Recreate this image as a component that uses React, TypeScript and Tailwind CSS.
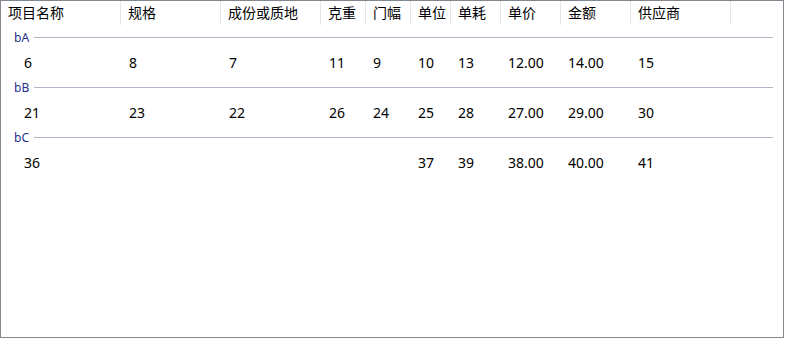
import React from 'react'

type Row = (string | null)[]

const columns = [
  { title: '项目名称', width: 120, pad: 'pl-[23px]' },
  { title: '规格', width: 100, pad: 'pl-[8px]' },
  { title: '成份或质地', width: 100, pad: 'pl-[8px]' },
  { title: '克重', width: 45, pad: 'pl-[8px]' },
  { title: '门幅', width: 45, pad: 'pl-[7px]' },
  { title: '单位', width: 40, pad: 'pl-[7px]' },
  { title: '单耗', width: 50, pad: 'pl-[7px]' },
  { title: '单价', width: 60, pad: 'pl-[7px]' },
  { title: '金额', width: 70, pad: 'pl-[7px]' },
  { title: '供应商', width: 100, pad: 'pl-[7px]' },
]

const groups: { name: string; row: Row }[] = [
  { name: 'bA', row: ['6', '8', '7', '11', '9', '10', '13', '12.00', '14.00', '15'] },
  { name: 'bB', row: ['21', '23', '22', '26', '24', '25', '28', '27.00', '29.00', '30'] },
  { name: 'bC', row: ['36', null, null, null, null, '37', '39', '38.00', '40.00', '41'] },
]

export default function App() {
  return (
    <div
      className="w-[784px] h-[338px] border border-[#828790] bg-white text-black overflow-hidden"
      style={{ fontFamily: '"Noto Sans", "Noto Sans CJK SC", sans-serif' }}
    >
      {/* Header */}
      <div className="flex h-[24px] text-[14px]">
        {columns.map((c, i) => (
          <div
            key={i}
            className="flex items-center border-r border-[#e5e5e5] pl-[7px] leading-none"
            style={{ width: c.width }}
          >
            {c.title}
          </div>
        ))}
      </div>

      {groups.map((g) => (
        <div key={g.name}>
          <div className="flex items-center h-[25px] pl-[13px] pr-[10px] gap-[5px]">
            <span className="text-[12px] text-[#1e3287] leading-none">{g.name}</span>
            <div className="flex-1 h-px bg-[#b0b7c6]" />
          </div>
          <div className="flex h-[25px] text-[14px]">
            {columns.map((c, i) => (
              <div
                key={i}
                className={`flex items-center leading-none ${c.pad}`}
                style={{ width: c.width }}
              >
                {g.row[i] ?? ''}
              </div>
            ))}
          </div>
        </div>
      ))}
    </div>
  )
}
